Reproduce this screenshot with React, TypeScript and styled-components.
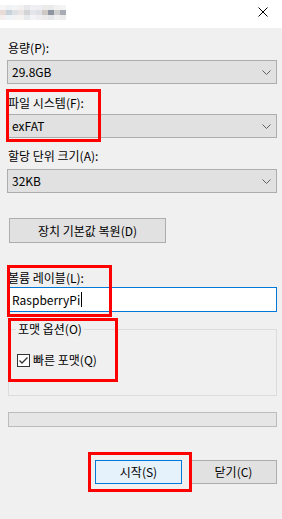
import styled, { createGlobalStyle } from "styled-components";

const GlobalStyle = createGlobalStyle`
  html, body {
    margin: 0;
    padding: 0;
    background: #f0f0f0;
  }
  body {
    font-family: "Noto Sans CJK KR", "Noto Sans", sans-serif;
    font-size: 12px;
    color: #000;
  }
`;

const Dialog = styled.div`
  position: relative;
  width: 282px;
  height: 519px;
  background: #f0f0f0;
  overflow: hidden;
`;

const TitleBar = styled.div`
  height: 28px;
  background: #fff;
  display: flex;
  align-items: flex-start;
  justify-content: space-between;
`;

const BlurGrid = styled.div`
  margin-top: 5px;
  display: grid;
  grid-template-columns: repeat(11, 6px);
  grid-auto-rows: 5px;
`;

const BlurCell = styled.span<{ $c: string }>`
  background: ${(p) => p.$c};
`;

const CloseBox = styled.div`
  width: 40px;
  height: 28px;
  display: flex;
  align-items: center;
  justify-content: center;
  margin-right: -1px;
  padding-bottom: 4px;
  box-sizing: border-box;
`;

const Body = styled.div`
  display: flex;
  flex-direction: column;
  padding: 0 5px 0 7px;
`;

const Label = styled.div<{ $top: number }>`
  margin-top: ${(p) => p.$top}px;
  padding-left: 1px;
  line-height: 16px;
  height: 16px;
  white-space: nowrap;
`;

const Combo = styled.div<{ $top: number }>`
  margin-top: ${(p) => p.$top}px;
  height: 24px;
  box-sizing: border-box;
  border: 1px solid #adadad;
  background: #e1e1e1;
  display: flex;
  align-items: center;
  justify-content: space-between;
  padding: 0 5px 0 4px;
  line-height: 16px;
`;

const PushButton = styled.div<{ $primary?: boolean }>`
  height: 24px;
  width: 87px;
  box-sizing: border-box;
  border: 1px solid ${(p) => (p.$primary ? "#0078d7" : "#adadad")};
  background: ${(p) => (p.$primary ? "#e5f1fb" : "#e1e1e1")};
  display: flex;
  align-items: center;
  justify-content: center;
  line-height: 16px;
`;

const ResetButton = styled(PushButton)`
  margin-top: 25px;
  margin-left: 2px;
  width: 157px;
  height: 25px;
`;

const TextBox = styled.div`
  margin-top: 1px;
  margin-left: 1px;
  height: 25px;
  box-sizing: border-box;
  border: 1px solid #0078d7;
  background: #fff;
  display: flex;
  align-items: center;
  padding-left: 3px;
  line-height: 16px;
`;

const Caret = styled.span`
  display: inline-block;
  width: 1px;
  height: 15px;
  background: #000;
  margin-left: 1px;
`;

const Group = styled.fieldset`
  margin: 9px 0 0 1px;
  padding: 0 6px 30px 8px;
  border: 1px solid #dcdcdc;
  min-width: 0;
  height: 75px;
  box-sizing: border-box;
`;

const Legend = styled.legend`
  padding: 0 2px;
  line-height: 16px;
  margin-left: -1px;
`;

const CheckRow = styled.label`
  margin-top: 15px;
  display: flex;
  align-items: center;
  gap: 3px;
  line-height: 16px;
`;

const CheckBox = styled.span`
  width: 13px;
  height: 13px;
  box-sizing: border-box;
  border: 1px solid #333;
  background: #fff;
  display: flex;
  align-items: center;
  justify-content: center;
`;

const Progress = styled.div`
  margin: 16px 0 0 1px;
  height: 15px;
  box-sizing: border-box;
  border: 1px solid #bcbcbc;
  background: #e6e6e6;
`;

const ButtonRow = styled.div`
  margin-top: 33px;
  display: flex;
  justify-content: flex-end;
  gap: 8px;
`;

const Mark = styled.div<{ $x: number; $y: number; $w: number; $h: number }>`
  position: absolute;
  left: ${(p) => p.$x}px;
  top: ${(p) => p.$y}px;
  width: ${(p) => p.$w}px;
  height: ${(p) => p.$h}px;
  box-sizing: border-box;
  border: 3px solid #f00;
  pointer-events: none;
`;

const blur = [
  "#f6f6f6", "#eef2f5", "#f4f4f4", "#f2f0f0", "#e6e8ea", "#f0f0f2", "#eeeef4", "#ecebe9", "#e9eaec", "#f1f1f1", "#f4f4f4",
  "#e8dcd8", "#c8d2da", "#dde0e4", "#ebe4e4", "#d4d4d6", "#e2e6ea", "#dfe0e6", "#cdc8c4", "#8e95a0", "#cfcfd0", "#a8adb5",
  "#f4efee", "#eef3f6", "#f3f3f4", "#f5f2f2", "#e8e9ea", "#f2f3f4", "#efeff2", "#ecebea", "#e4e6e9", "#f0f0f0", "#ebebec",
];

function Chevron() {
  return (
    <svg width="9" height="5" viewBox="0 0 9 5">
      <path d="M0.5 0.5 L4.5 4.5 L8.5 0.5" fill="none" stroke="#606060" strokeWidth="1" />
    </svg>
  );
}

export default function App() {
  return (
    <>
      <GlobalStyle />
      <Dialog>
        <TitleBar>
          <BlurGrid>
            {blur.map((c, i) => (
              <BlurCell key={i} $c={c} />
            ))}
          </BlurGrid>
          <CloseBox>
            <svg width="10" height="10" viewBox="0 0 10 10">
              <path d="M0.5 0.5 L9.5 9.5 M9.5 0.5 L0.5 9.5" stroke="#000" strokeWidth="1" />
            </svg>
          </CloseBox>
        </TitleBar>
        <Body>
          <Label $top={12}>용량(P):</Label>
          <Combo $top={4}>
            29.8GB
            <Chevron />
          </Combo>
          <Label $top={11}>파일 시스템(F):</Label>
          <Combo $top={3}>
            exFAT
            <Chevron />
          </Combo>
          <Label $top={10}>할당 단위 크기(A):</Label>
          <Combo $top={5}>
            32KB
            <Chevron />
          </Combo>
          <ResetButton>장치 기본값 복원(D)</ResetButton>
          <Label $top={27}>볼륨 레이블(L):</Label>
          <TextBox>
            RaspberryPi
            <Caret />
          </TextBox>
          <Group>
            <Legend>포맷 옵션(O)</Legend>
            <CheckRow>
              <CheckBox>
                <svg width="11" height="11" viewBox="0 0 11 11">
                  <path d="M1.5 5.5 L4 8 L9.5 2.5" fill="none" stroke="#333" strokeWidth="1.3" />
                </svg>
              </CheckBox>
              빠른 포맷(Q)
            </CheckRow>
          </Group>
          <Progress />
          <ButtonRow>
            <PushButton $primary>시작(S)</PushButton>
            <PushButton>닫기(C)</PushButton>
          </ButtonRow>
        </Body>
        <Mark $x={6} $y={89} $w={95} $h={53} />
        <Mark $x={7} $y={265} $w={105} $h={52} />
        <Mark $x={8} $y={318} $w={110} $h={64} />
        <Mark $x={88} $y={452} $w={104} $h={40} />
      </Dialog>
    </>
  );
}
